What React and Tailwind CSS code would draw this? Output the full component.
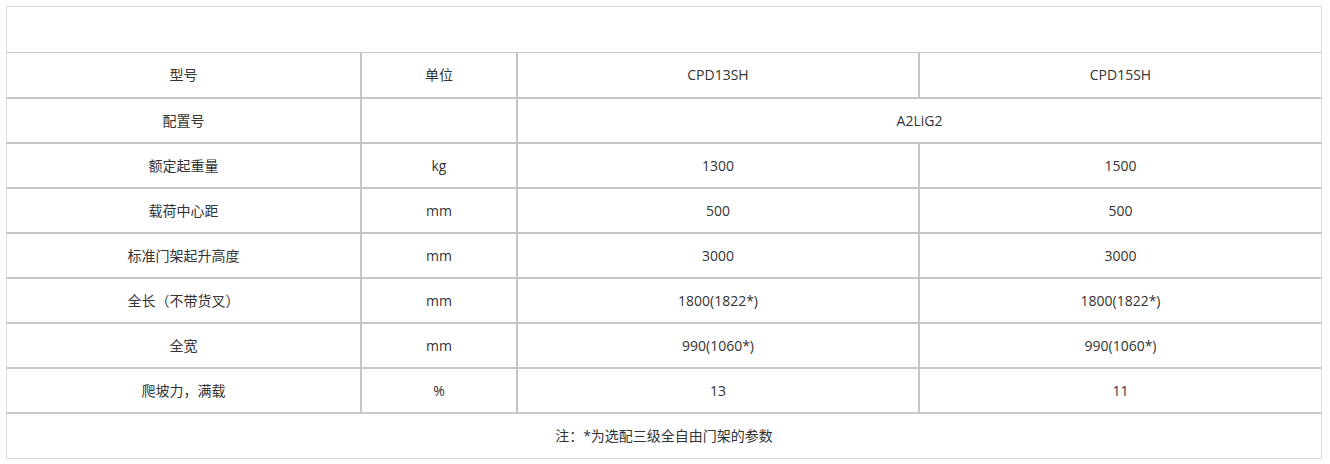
// Spec sheet table for CPD13SH / CPD15SH forklifts.
const ROWS = [
  ['额定起重量', 'kg', '1300', '1500'],
  ['载荷中心距', 'mm', '500', '500'],
  ['标准门架起升高度', 'mm', '3000', '3000'],
  ['全长（不带货叉）', 'mm', '1800(1822*)', '1800(1822*)'],
  ['全宽', 'mm', '990(1060*)', '990(1060*)'],
  ['爬坡力，满载', '%', '13', '11'],
]

const cell = 'h-[45px] p-0 text-center align-middle border-t-2 border-[#c6c6c6]'
const inner = cell + ' border-l-2'

export default function App() {
  return (
    <div
      className="min-h-[464px] w-[1330px] bg-white pt-[6px] pl-[6px] text-[14px] text-[#333]"
      style={{ fontFamily: '"Open Sans", "Noto Sans CJK SC", sans-serif' }}
    >
      <div className="w-[1316px] border border-[#dcdcdc]">
        <div className="h-[45px]" />
        <table className="w-full table-fixed border-collapse">
          <colgroup>
            <col className="w-[354px]" />
            <col className="w-[156px]" />
            <col className="w-[402px]" />
            <col />
          </colgroup>
          <tbody>
            <tr>
              <td className={cell + ' !border-t'}>型号</td>
              <td className={inner + ' !border-t'}>单位</td>
              <td className={inner + ' !border-t'}>CPD13SH</td>
              <td className={inner + ' !border-t'}>CPD15SH</td>
            </tr>
            <tr>
              <td className={cell}>配置号</td>
              <td className={inner}></td>
              <td className={inner} colSpan={2}>A2LiG2</td>
            </tr>
            {ROWS.map((r) => (
              <tr key={r[0]}>
                <td className={cell}>{r[0]}</td>
                <td className={inner}>{r[1]}</td>
                <td className={inner}>{r[2]}</td>
                <td className={inner}>{r[3]}</td>
              </tr>
            ))}
            <tr>
              <td className={cell} colSpan={4}>注：*为选配三级全自由门架的参数</td>
            </tr>
          </tbody>
        </table>
      </div>
    </div>
  )
}
